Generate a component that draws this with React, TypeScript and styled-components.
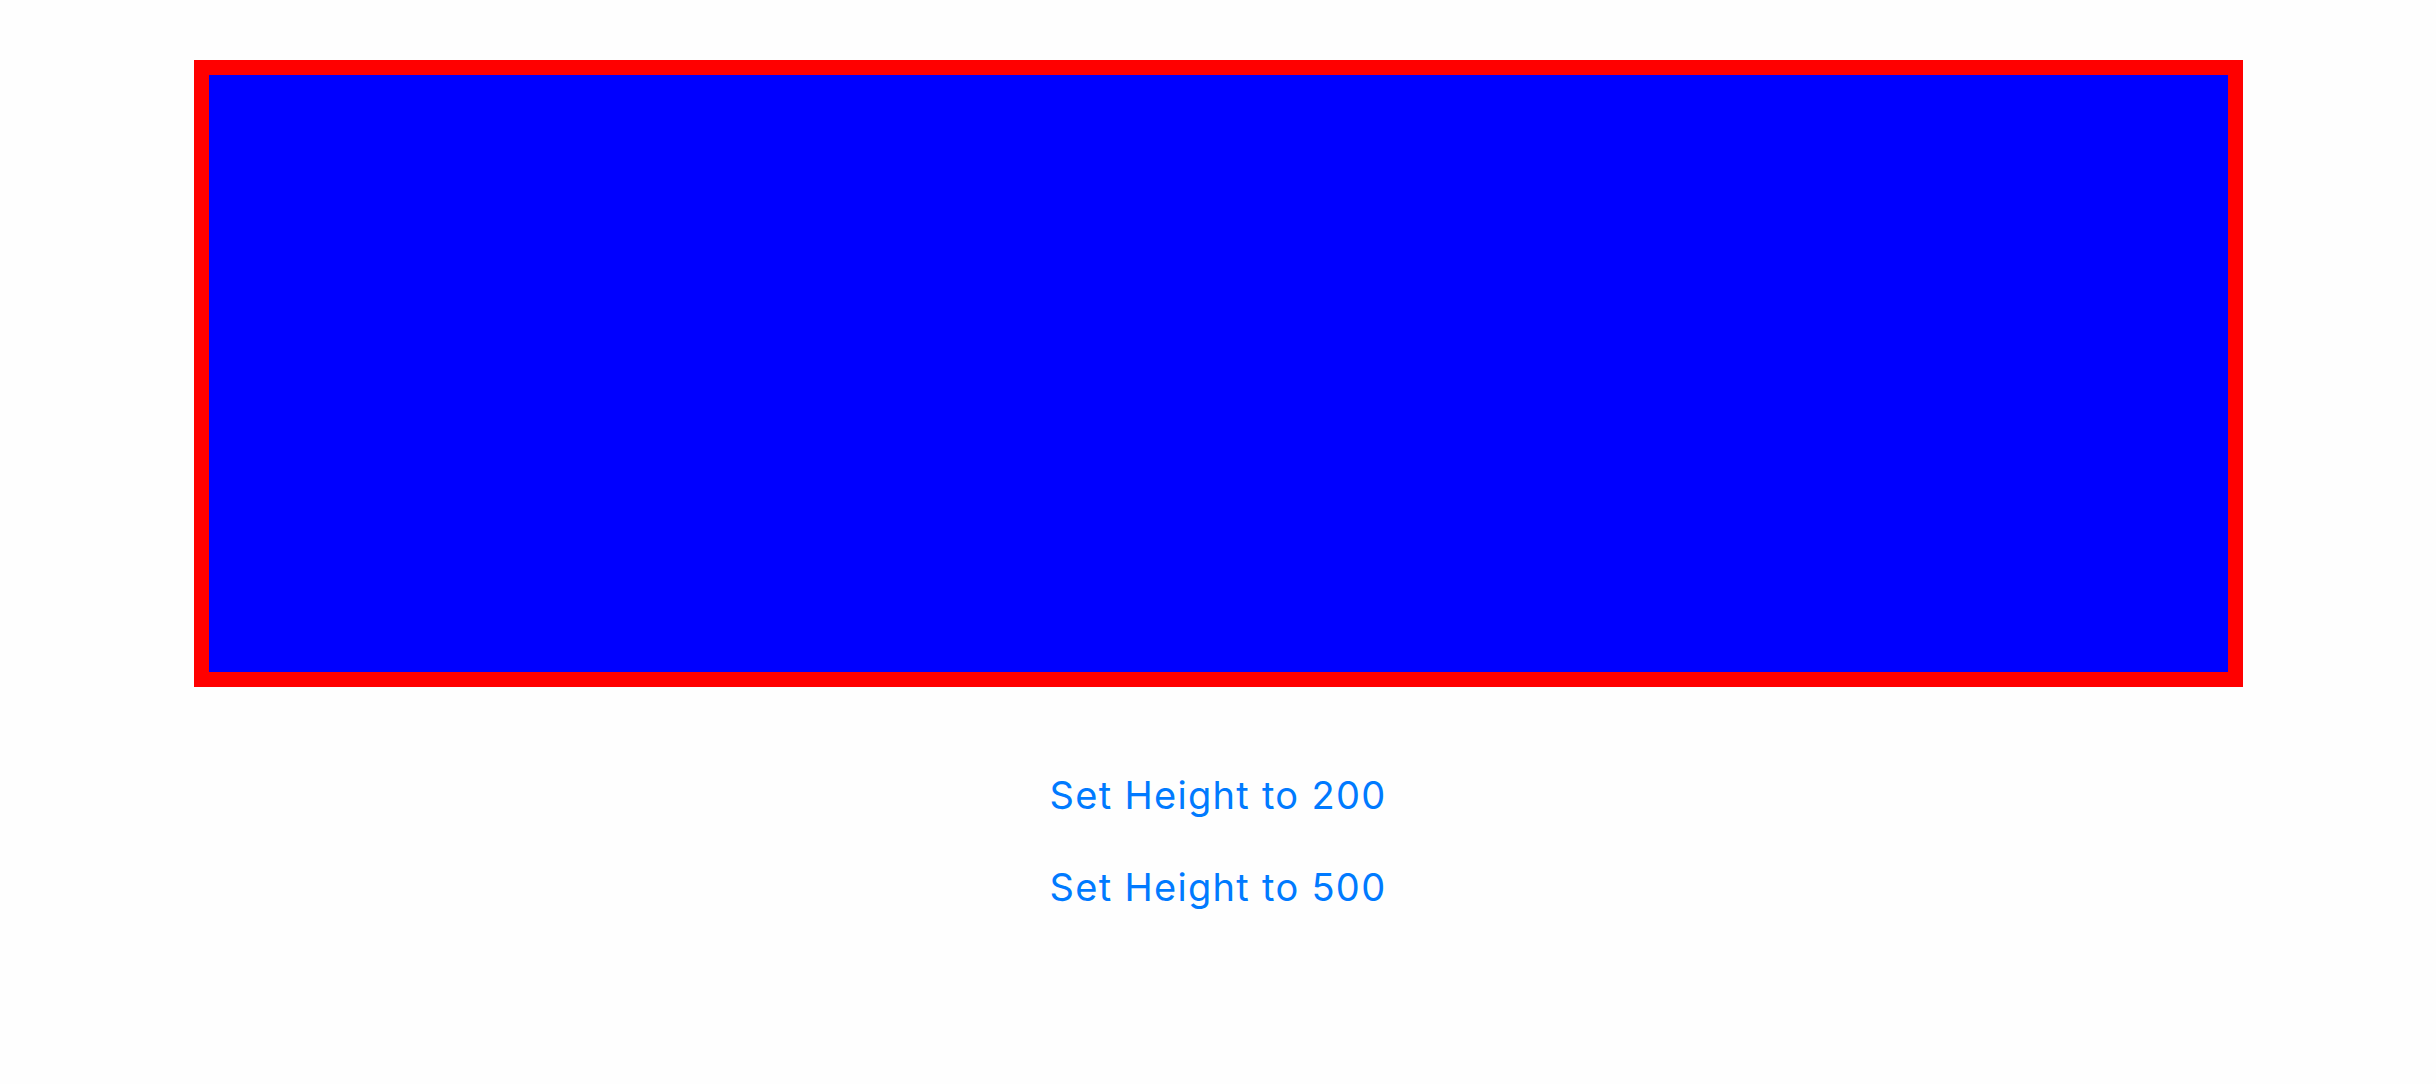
import React, { useState } from "react";
import styled, { createGlobalStyle } from "styled-components";

const GlobalStyle = createGlobalStyle`
  html, body {
    margin: 0;
    padding: 0;
    background: #fefefe;
  }
  body {
    font-family: Inter, "Liberation Sans", sans-serif;
  }
`;

const Page = styled.div`
  display: flex;
  flex-direction: column;
  align-items: center;
  padding-top: 60px;
  min-height: 1084px;
  box-sizing: border-box;
`;

const Frame = styled.div<{ $h: number }>`
  width: 2049px;
  height: ${(p) => p.$h}px;
  box-sizing: border-box;
  border: 15px solid #ff0000;
  background: #0000ff;
`;

const Buttons = styled.div`
  display: flex;
  flex-direction: column;
  align-items: center;
  gap: 46px;
  margin-top: 85px;
`;

const LinkButton = styled.button`
  border: none;
  background: none;
  padding: 0;
  margin: 0;
  font-family: Inter, "Liberation Sans", sans-serif;
  font-size: 38px;
  line-height: 46px;
  letter-spacing: 1.3px;
  color: #007aff;
  cursor: pointer;
`;

export default function App() {
  const [h, setH] = useState(627);
  return (
    <>
      <GlobalStyle />
      <Page>
        <Frame $h={h} />
        <Buttons>
          <LinkButton onClick={() => setH(200)}>Set Height to 200</LinkButton>
          <LinkButton onClick={() => setH(500)}>Set Height to 500</LinkButton>
        </Buttons>
      </Page>
    </>
  );
}
